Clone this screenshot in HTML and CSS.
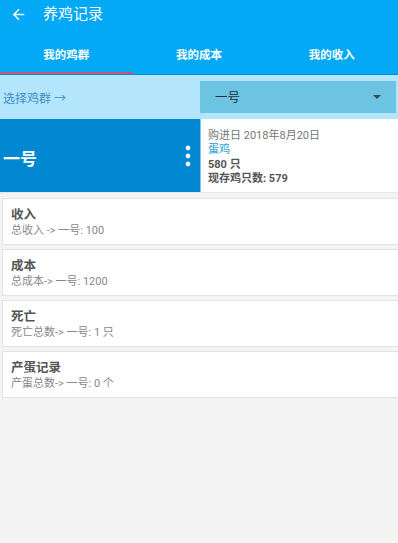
FILE: index.html
```html
<!DOCTYPE html>
<html lang="zh">
<head>
<meta charset="utf-8">
<link rel="stylesheet" href="styles.css">
</head>
<body>
<header class="appbar">
  <div class="toolbar">
    <svg class="back" viewBox="0 0 24 24" width="17" height="17"><path fill="#fff" d="M20 11H7.83l5.59-5.59L12 4l-8 8 8 8 1.41-1.41L7.83 13H20v-2z"/></svg>
    <span class="title">养鸡记录</span>
  </div>
  <nav class="tabs">
    <div class="tab active">我的鸡群</div>
    <div class="tab">我的成本</div>
    <div class="tab">我的收入</div>
  </nav>
</header>
<section class="selector">
  <div class="sel-label">选择鸡群 →</div>
  <div class="dropdown">
    <span>一号</span>
    <svg width="8" height="4" viewBox="0 0 8 4"><path d="M0 0h8L4 4z" fill="#3a4a52"/></svg>
  </div>
</section>
<section class="group">
  <div class="group-name">
    <span>一号</span>
    <svg class="dots" width="8" height="22" viewBox="0 0 8 22"><circle cx="4" cy="3" r="2.4" fill="#e6f3fb"/><circle cx="4" cy="11" r="2.4" fill="#e6f3fb"/><circle cx="4" cy="19" r="2.4" fill="#e6f3fb"/></svg>
  </div>
  <div class="group-info">
    <div class="muted">购进日 2018年8月20日</div>
    <div class="link">蛋鸡</div>
    <div class="strong">580 只</div>
    <div class="strong">现存鸡只数: 579</div>
  </div>
</section>
<main class="list">
  <div class="card"><div class="card-title">收入</div><div class="card-sub">总收入 -&gt; 一号: 100</div></div>
  <div class="card"><div class="card-title">成本</div><div class="card-sub">总成本-&gt; 一号: 1200</div></div>
  <div class="card"><div class="card-title">死亡</div><div class="card-sub">死亡总数-&gt; 一号: 1 只</div></div>
  <div class="card"><div class="card-title">产蛋记录</div><div class="card-sub">产蛋总数-&gt; 一号: 0 个</div></div>
</main>
</body>
</html>
```
FILE: styles.css
```css
* { box-sizing: border-box; }
body {
  margin: 0;
  width: 398px;
  min-height: 543px;
  background: #f4f4f4;
  font-family: Roboto, "Noto Sans CJK SC", sans-serif;
  overflow: hidden;
}
.appbar {
  background: #03a9f4;
  border-bottom: 1px solid #0b8ccc;
  color: #fff;
}
.toolbar {
  height: 28px;
  display: flex;
  align-items: center;
  padding-left: 10px;
}
.back { display: block; }
.title {
  margin-left: 16px;
  font-size: 15px;
  line-height: 20px;
}
.tabs {
  display: flex;
}
.tab {
  flex: 1;
  text-align: center;
  font-size: 11.5px;
  font-weight: bold;
  line-height: 16px;
  padding-top: 19px;
  padding-bottom: 9px;
  border-bottom: 2px solid transparent;
}
.tab.active { border-bottom-color: #c9547a; }
.selector {
  height: 44px;
  background: #b3e5fc;
  display: flex;
  align-items: center;
}
.sel-label {
  width: 200px;
  padding-left: 3px;
  font-size: 12px;
  color: #3f8dc4;
}
.dropdown {
  width: 196px;
  height: 32px;
  margin-top: -1px;
  background: #6cc4e2;
  display: flex;
  align-items: center;
  justify-content: space-between;
  padding: 0 15px 0 15px;
  font-size: 12.5px;
  color: #263238;
}
.group {
  display: flex;
  height: 74px;
  border-bottom: 1px solid #e6e6e6;
}
.group-name {
  width: 200px;
  background: #0288d1;
  color: #fff;
  font-size: 17px;
  font-weight: bold;
  display: flex;
  align-items: center;
  justify-content: space-between;
  padding: 3px 8px 0 3px;
}
.dots { display: block; margin-top: -3px; }
.group-info {
  flex: 1;
  background: #fff;
  border-left: 1px solid #7fc8ee;
  padding: 10px 7px 0;
  font-size: 11px;
  line-height: 14.4px;
}
.muted { color: #777; }
.link { color: #2a9fd8; }
.strong { color: #555; font-weight: bold; }
.list {
  padding-top: 5px;
}
.card {
  margin: 0 0 4px 2px;
  height: 47px;
  background: #fff;
  border: 1px solid #e2e2e2;
  border-right: none;
  padding: 8px 8px 0;
}
.card-title {
  font-size: 12.5px;
  font-weight: bold;
  color: #555;
  line-height: 16px;
}
.card-sub {
  font-size: 11px;
  color: #888;
  line-height: 15px;
}
```
